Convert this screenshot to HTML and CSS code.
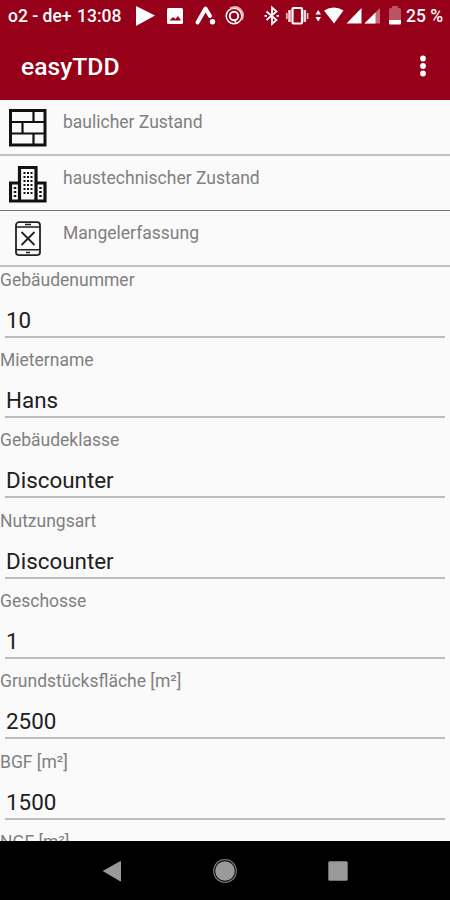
FILE: index.html
```html
<!DOCTYPE html>
<html lang="de">
<head>
<meta charset="utf-8">
<title>easyTDD</title>
<link rel="stylesheet" href="styles.css">
</head>
<body>
<div class="screen">
  <header class="top">
    <div class="status">
      <span class="carrier">o2 - de+</span>
      <span class="clock">13:08</span>
      <svg class="notifications" width="110" height="24" viewBox="135 4 110 24" fill="#fff">
        <path d="M136 6L155 15.500L136 26Z"/>
        <rect x="167" y="8" width="16" height="16" rx="1.500"/>
        <path d="M169.500 20.500L173 17L175.500 19L178 16L181 20.500Z" fill="#960018"/>
        <path d="M197.500 22.500L205.500 8.500L210 16" fill="none" stroke="#fff" stroke-width="4" stroke-linejoin="round" stroke-linecap="round"/>
        <circle cx="212.500" cy="21.800" r="2.700"/>
        <g fill="none" stroke="#fff">
          <circle cx="234" cy="16" r="7.800" stroke-width="1.500"/>
          <circle cx="234" cy="16" r="4.200" stroke-width="2"/>
          <path d="M230 8.500Q236 5.500 240 9Q245 14 241.500 20" stroke="#e4b5bc" stroke-width="2"/>
          <path d="M234 19.500L236 23" stroke-width="1.500"/>
        </g>
      </svg>
      <svg class="system" width="140" height="24" viewBox="263 4 140 24" fill="#fff">
        <path d="M266.500 11.500L276.500 20L272 24V7.500L276.500 11.500L266.500 20M264.500 15.800H267M276.500 15.800H279" fill="none" stroke="#fff" stroke-width="1.800"/>
        <rect x="292.500" y="8" width="9.500" height="15.500" rx="1" fill="none" stroke="#fff" stroke-width="2.200"/>
        <path d="M289.500 10V22M304.800 10V22" stroke="#f1d5d9" stroke-width="2.600"/>
        <path d="M286.800 13V19M307.600 13V19" stroke="#e4b5bc" stroke-width="1.800"/>
        <path d="M315.500 14.500L318.200 10L321 14.500ZM315.500 17L318.200 21.500L321 17Z"/>
        <path d="M324 10.500Q334 4.500 343.500 10.500L334 23.500Z"/>
        <path d="M346.500 23.500L361.500 8V23.500Z"/>
        <path d="M364.500 23.500L380 8V23.500Z" fill="#c56a78"/>
        <path d="M364.500 23.500L375.500 12.500V23.500Z"/>
        <path d="M389 24V9.500Q389 8 390.500 8H392V6H398V8H399.500Q401 8 401 9.500V24Z" fill="#bd5262"/>
        <path d="M389 20H401V23.500Q401 24.500 400 24.500H390Q389 24.500 389 23.500Z"/>
      </svg>
      <span class="battery">25 %</span>
    </div>
    <div class="appbar">
      <h1>easyTDD</h1>
      <svg class="more" width="8" height="24" viewBox="0 0 8 24" fill="#fff"><circle cx="4" cy="4.500" r="2.900"/><circle cx="4" cy="12" r="2.900"/><circle cx="4" cy="19.500" r="2.900"/></svg>
    </div>
  </header>

  <nav class="menu">
    <a class="item">
      <svg width="38" height="38" viewBox="0 0 38 38" fill="none" stroke="#111"><rect x="1.500" y="1.500" width="34.500" height="34.500" stroke-width="3"/><path d="M2 13H36M2 24.500H36M24.500 2V13M13.500 13V24.500M24.500 24.500V36" stroke-width="2.200"/></svg>
      <span>baulicher Zustand</span>
    </a>
    <a class="item item-dark">
      <svg width="38" height="38" viewBox="0 0 38 38" fill="none" stroke="#111"><path d="M1.500 18H10.500V36H1.500ZM27 18H36V36H27ZM10.500 2.500H27V36H10.500Z" stroke-width="3.200"/><path d="M15.500 7V30M19 7V30M22.500 7V30" stroke-width="2" stroke-dasharray="2 2"/><path d="M6 22V32M31.500 22V32" stroke-width="2.500" stroke-dasharray="2 2"/></svg>
      <span>haustechnischer Zustand</span>
    </a>
    <a class="item">
      <svg width="38" height="38" viewBox="0 0 38 38" fill="none" stroke="#222"><rect x="7" y="2.200" width="24" height="33" rx="3" stroke-width="1.800"/><path d="M7 7H31M7 29.700H31M16 4.500H22M17 32.500H21" stroke-width="1.500"/><path d="M12.500 12L25.500 25M25.500 12L12.500 25" stroke-width="1.800"/></svg>
      <span>Mangelerfassung</span>
    </a>
  </nav>

  <main class="form">
    <div class="field"><label>Gebäudenummer</label><div class="value">10</div></div>
    <div class="field"><label>Mietername</label><div class="value">Hans</div></div>
    <div class="field"><label>Gebäudeklasse</label><div class="value">Discounter</div></div>
    <div class="field"><label>Nutzungsart</label><div class="value">Discounter</div></div>
    <div class="field"><label>Geschosse</label><div class="value">1</div></div>
    <div class="field"><label>Grundstücksfläche [m²]</label><div class="value">2500</div></div>
    <div class="field"><label>BGF [m²]</label><div class="value">1500</div></div>
    <div class="field"><label>NGF [m²]</label><div class="value"></div></div>
  </main>

  <footer class="navbar">
    <svg width="24" height="24" viewBox="0 0 24 24"><path d="M3.500 12L20.500 2.500V22Z" fill="#999" stroke="#999" stroke-linejoin="round"/></svg>
    <svg width="26" height="26" viewBox="0 0 26 26"><circle cx="13" cy="13" r="11.300" fill="none" stroke="#777" stroke-width="1.200"/><circle cx="13" cy="13" r="9.800" fill="#999"/></svg>
    <svg width="24" height="24" viewBox="0 0 24 24"><rect x="2.300" y="2.300" width="19.400" height="19.400" rx="1.500" fill="#999"/></svg>
  </footer>
</div>
</body>
</html>
```
FILE: styles.css
```css
* { box-sizing: border-box; }

body {
  margin: 0;
  font-family: Roboto, "Liberation Sans", sans-serif;
  background: #fafafa;
}

.screen {
  display: flex;
  flex-direction: column;
  width: 450px;
  height: 900px;
  overflow: hidden;
}

svg { display: block; flex: none; }

.top {
  flex: none;
  height: 100px;
  background: #960018;
  color: #fff;
}

.status {
  display: flex;
  align-items: center;
  height: 32px;
  padding-left: 8px;
  font-size: 17.5px;
  font-weight: 500;
  white-space: nowrap;
}

.carrier { width: 69px; }
.clock { width: 58px; }
.notifications { margin-right: 18px; }
.system { margin-right: 3px; }

.appbar {
  display: flex;
  align-items: center;
  justify-content: space-between;
  height: 68px;
  padding: 0 23px 0 21px;
}

.appbar h1 {
  margin: 2px 0 0;
  font-size: 24.7px;
  font-weight: 500;
  line-height: 30px;
}

.menu { flex: none; }

.item {
  display: flex;
  height: 55.5px;
  padding: 9px 0 0 9px;
  border-bottom: 2px solid #c0c0c0;
}

.item-dark { border-bottom: 1px solid #777; }

.item span {
  margin: 3px 0 0 16px;
  color: #808080;
  font-size: 17.5px;
  line-height: 21px;
}

.form {
  flex: 1;
  min-height: 0;
  overflow: hidden;
}

.field { height: 80.4px; }

.field label {
  display: block;
  height: 27px;
  color: #808080;
  font-size: 17.5px;
  line-height: 27px;
}

.value {
  height: 44px;
  margin: 0 5px;
  padding-left: 1px;
  border-bottom: 2px solid #bdbdbd;
  color: #202020;
  font-size: 22.4px;
  line-height: 52px;
}

.navbar {
  flex: none;
  display: flex;
  align-items: center;
  justify-content: space-between;
  height: 59px;
  padding: 0 100px;
  background: #000;
}
```
